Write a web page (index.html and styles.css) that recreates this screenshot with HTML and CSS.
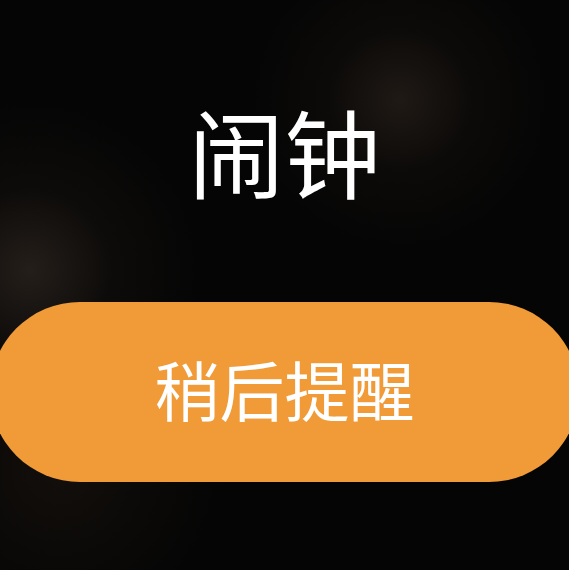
FILE: index.html
```html
<!DOCTYPE html>
<html lang="zh-CN">
<head>
<meta charset="utf-8">
<title>闹钟</title>
<link rel="stylesheet" href="styles.css">
</head>
<body>
<main class="screen">
  <h1 class="title">闹钟</h1>
  <button class="snooze" type="button">稍后提醒</button>
</main>
</body>
</html>
```

FILE: styles.css
```css
html, body {
  margin: 0;
  padding: 0;
  height: 100%;
}

body {
  background-color: #050505;
  background-image:
    radial-gradient(circle at 400px 100px, rgba(36, 29, 24, 0.85) 0, rgba(20, 16, 13, 0.5) 70px, rgba(5, 5, 5, 0) 150px),
    radial-gradient(circle at 30px 270px, rgba(40, 33, 28, 0.9) 0, rgba(22, 18, 15, 0.5) 80px, rgba(5, 5, 5, 0) 170px),
    radial-gradient(circle at 60px 470px, rgba(22, 17, 13, 0.8) 0, rgba(5, 5, 5, 0) 160px);
  font-family: "Noto Sans CJK SC", "Noto Sans", sans-serif;
  overflow: hidden;
}

.screen {
  display: flex;
  flex-direction: column;
  align-items: center;
  padding-top: 100px;
}

.title {
  margin: 0 0 102px;
  font-size: 96px;
  line-height: 100px;
  font-weight: 400;
  color: #ffffff;
}

.snooze {
  align-self: stretch;
  margin: 0 -10px;
  height: 180px;
  border: none;
  border-radius: 90px;
  background: #f09b38;
  color: #ffffff;
  font-family: inherit;
  font-size: 65px;
  font-weight: 400;
  line-height: 1;
  padding: 0 0 8px;
}
```
